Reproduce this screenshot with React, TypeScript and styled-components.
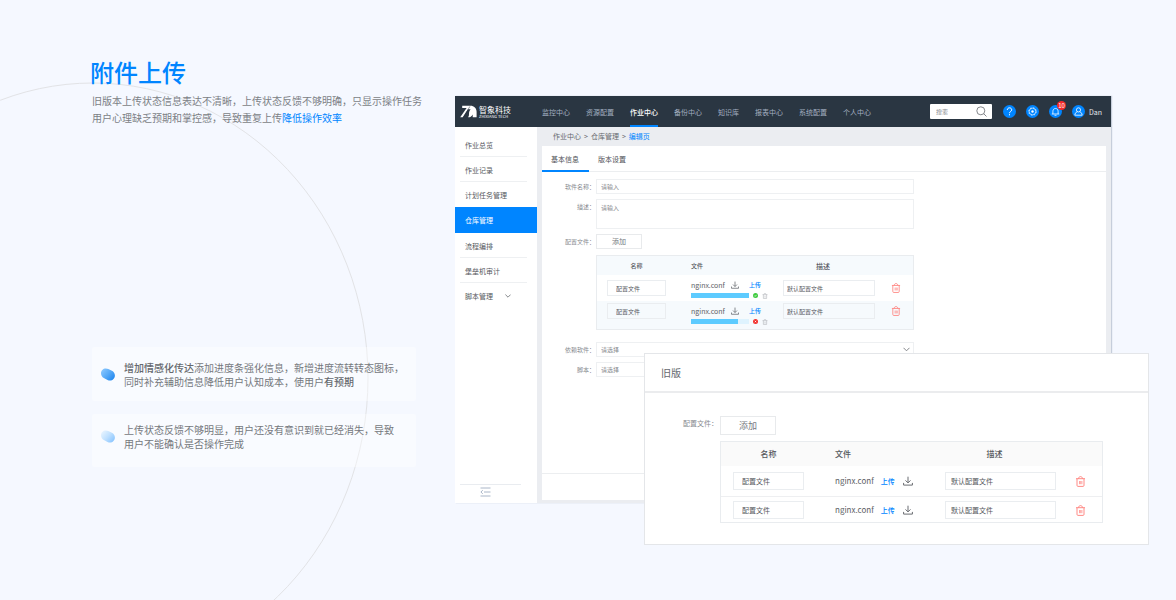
import React from "react";
import styled, { createGlobalStyle, css } from "styled-components";

const BLUE = "#0085ff";

const GlobalStyle = createGlobalStyle`
  *, *::before, *::after { box-sizing: border-box; }
  html, body { margin: 0; padding: 0; background: #f5f8ff; }
  body, button, input, textarea, select {
    font-family: "Noto Sans CJK SC", "Noto Sans", sans-serif;
  }
  button, input, textarea, select { margin: 0; border-radius: 0; outline-color: ${BLUE}; }
  a { text-decoration: none; }
  ul { list-style: none; margin: 0; padding: 0; }
  svg { display: block; flex: none; }
`;

/* ---------- page ---------- */

const Page = styled.div`
  position: relative;
  min-height: 100vh;
  overflow: hidden;
  display: grid;
  grid-template-columns: minmax(0, 326fr) minmax(0, 694fr);
  column-gap: 39px;
  padding: 57px 27px 50px 90px;
  align-items: start;
`;

const Arc = styled.svg`
  position: absolute;
  left: 0;
  top: 0;
  pointer-events: none;
`;

const Intro = styled.section`
  position: relative;
`;

const Title = styled.h1`
  margin: 0;
  font-size: 24px;
  line-height: 30px;
  font-weight: 500;
  color: ${BLUE};
`;

const Summary = styled.p`
  margin: 5px 0 0 2px;
  font-size: 10px;
  line-height: 17px;
  color: #7c7f85;
  white-space: nowrap;
`;

const Accent = styled.span`
  color: ${BLUE};
`;

const Notes = styled.div`
  margin: 221px 0 0 2px;
  display: flex;
  flex-direction: column;
  gap: 13px;
`;

const Note = styled.div<{ $raised?: boolean }>`
  display: flex;
  align-items: center;
  gap: 9px;
  padding: ${(p) => (p.$raised ? "9px 0 16px 9px" : "14px 0 12px 9px")};
  border-radius: 2px;
  background: rgba(255, 255, 255, 0.4);
  font-size: 10px;
  line-height: 14px;
  color: #75787d;
  white-space: nowrap;
`;

const Strong = styled.b`
  font-weight: 500;
  color: #66696e;
`;

/* ---------- application window ---------- */

const Stage = styled.section`
  position: relative;
  margin-top: 39px;
`;

const AppWindow = styled.div`
  margin-right: 38px;
  background: #ebedf1;
  box-shadow: 1px 0 1px rgba(60, 80, 110, 0.25);
`;

const TopBar = styled.header`
  display: flex;
  align-items: center;
  height: 31px;
  padding: 0 9px 0 5px;
  background: #2a3642;
`;

const Brand = styled.div`
  display: flex;
  align-items: center;
  gap: 2px;
  width: 82px;
  color: #fff;
`;

const BrandName = styled.div`
  font-size: 8px;
  line-height: 9px;
  white-space: nowrap;
`;

const BrandSub = styled.div`
  font-size: 4px;
  line-height: 5px;
  white-space: nowrap;
`;

const TopNav = styled.nav`
  display: flex;
  gap: 16px;
  height: 31px;
`;

const TopLink = styled.a<{ $active?: boolean }>`
  font-size: 7px;
  line-height: 32px;
  white-space: nowrap;
  color: ${(p) => (p.$active ? "#fff" : "#a3afc0")};
  font-weight: ${(p) => (p.$active ? 500 : 400)};
  box-shadow: ${(p) => (p.$active ? `inset 0 -2px ${BLUE}` : "none")};
`;

const Tools = styled.div`
  display: flex;
  align-items: center;
  gap: 10px;
  margin-left: auto;
`;

const SearchBox = styled.label`
  display: flex;
  align-items: center;
  width: 62px;
  height: 15px;
  margin-right: 1px;
  padding: 0 5px 0 6px;
  background: #fff;
  border-radius: 1px;
`;

const SearchInput = styled.input`
  flex: 1;
  min-width: 0;
  border: 0;
  padding: 0;
  background: transparent;
  font-size: 6px;
  line-height: 9px;
  &::placeholder { color: #888b90; opacity: 1; }
`;

const RoundButton = styled.button`
  position: relative;
  width: 13px;
  height: 13px;
  padding: 0;
  border: 0;
  border-radius: 50%;
  background: ${BLUE};
  display: flex;
  align-items: center;
  justify-content: center;
`;

const Badge = styled.span`
  position: absolute;
  right: -4px;
  top: -4px;
  width: 9px;
  height: 9px;
  border-radius: 50%;
  background: #f52a2a;
  color: #fff;
  font-size: 6px;
  line-height: 9px;
  text-align: center;
`;

const User = styled.div`
  display: flex;
  align-items: center;
  gap: 4px;
  font-size: 7px;
  line-height: 10px;
  color: #e4e8ee;
`;

const Body = styled.div`
  display: flex;
  align-items: stretch;
  min-height: 376px;
`;

const Sidebar = styled.aside`
  width: 82px;
  flex: none;
  display: flex;
  flex-direction: column;
  padding: 5px 0 6px;
  background: #fff;
`;

const SideItem = styled.li<{ $active?: boolean; $line?: boolean }>`
  ${(p) =>
    p.$active
      ? css`
          background: ${BLUE};
          padding: 0 10px;
          height: 26px;
        `
      : css`
          margin: 0 10px 0 5px;
          padding: 0 5px;
          height: 25px;
          border-bottom: 1px solid ${p.$line ? "#eef0f2" : "transparent"};
        `}
`;

const SideLink = styled.a<{ $active?: boolean }>`
  display: flex;
  align-items: center;
  gap: 12px;
  height: 25px;
  font-size: 7px;
  line-height: 10px;
  color: ${(p) => (p.$active ? "#fff" : "#55585d")};
`;

const SideFoot = styled.div`
  margin: auto 16px 0 5px;
  padding: 2px 11px 0 0;
  border-top: 1px solid #e9ecf0;
  display: flex;
  justify-content: center;
`;

const CollapseButton = styled.button`
  border: 0;
  background: transparent;
  padding: 0;
`;

const Main = styled.main`
  flex: 1;
  min-width: 0;
  display: flex;
  flex-direction: column;
  padding: 0 5px 3px;
`;

const Crumbs = styled.nav`
  display: flex;
  gap: 3px;
  height: 19px;
  padding-left: 11px;
  font-size: 7px;
  line-height: 18px;
  color: #66696e;
`;

const Crumb = styled.a<{ $current?: boolean }>`
  color: ${(p) => (p.$current ? BLUE : "inherit")};
`;

const Panel = styled.div`
  flex: 1;
  display: flex;
  flex-direction: column;
  background: #fff;
`;

const Tabs = styled.div`
  display: flex;
  height: 26px;
  border-bottom: 1px solid #eceef0;
`;

const Tab = styled.button<{ $active?: boolean }>`
  height: 26px;
  padding: 0 10px 0 9px;
  border: 0;
  background: transparent;
  box-shadow: ${(p) => (p.$active ? `inset 0 -2px ${BLUE}` : "none")};
  font-size: 7px;
  line-height: 26px;
  color: #4f5257;
`;

const Form = styled.form`
  display: flex;
  flex-direction: column;
  gap: 5px;
  max-width: 372px;
  padding-top: 7px;
`;

const PanelFoot = styled.div`
  margin-top: auto;
  height: 27px;
  border-top: 1px solid #eceef0;
`;

/* ---------- form parts ---------- */

const FieldRow = styled.div<{ $large?: boolean }>`
  display: grid;
  grid-template-columns: ${(p) => (p.$large ? "73px" : "53px")} minmax(0, 1fr);
  column-gap: ${(p) => (p.$large ? "2px" : "1px")};
`;

const Label = styled.label<{ $large?: boolean }>`
  text-align: right;
  font-size: ${(p) => (p.$large ? "7px" : "6px")};
  line-height: 15px;
  color: #888b90;
  white-space: nowrap;
`;

const fieldLook = css`
  width: 100%;
  border: 1px solid #eef0f2;
  background: #fff;
  font-size: 6px;
  line-height: 9px;
  color: #85888d;
`;

const TextInput = styled.input`
  ${fieldLook}
  height: 15px;
  padding: 0 4px;
  &::placeholder { color: #85888d; opacity: 1; }
`;

const TextArea = styled.textarea`
  ${fieldLook}
  display: block;
  height: 30px;
  padding: 3px 4px;
  resize: none;
  &::placeholder { color: #85888d; opacity: 1; }
`;

const SelectBox = styled.div`
  position: relative;
`;

const Select = styled.select`
  ${fieldLook}
  display: block;
  appearance: none;
  height: 15px;
  padding: 0 4px;
`;

const SelectArrow = styled.svg`
  position: absolute;
  right: 4px;
  top: 5px;
  pointer-events: none;
`;

const AddButton = styled.button<{ $large?: boolean }>`
  display: block;
  width: ${(p) => (p.$large ? "56px" : "46px")};
  height: ${(p) => (p.$large ? "19px" : "15px")};
  margin-bottom: 6px;
  padding: 0;
  border: 1px solid #e8eaec;
  background: #fff;
  font-size: ${(p) => (p.$large ? "9px" : "7px")};
  line-height: 13px;
  color: #777a7f;
`;

/* ---------- file table ---------- */

const TableFrame = styled.div<{ $large?: boolean }>`
  border: 1px solid #e9ecef;
  margin-bottom: ${(p) => (p.$large ? "0" : "7px")};
`;

const Table = styled.table`
  width: 100%;
  table-layout: fixed;
  border-collapse: separate;
  border-spacing: 0;
`;

type CellKind = "name" | "file" | "desc" | "action";

const smallPad = { name: "0 10px", file: "0 0 0 15px", desc: "0 10px", action: "0 0 0 6px" };
const largePad = { name: "0 12px", file: "0 0 0 19px", desc: "0 12px", action: "0 0 0 7px" };
const smallWidth = { name: "79px", file: "97px", desc: "auto", action: "28px" };
const largeWidth = { name: "95px", file: "117px", desc: "auto", action: "34px" };

const HeadCell = styled.th<{ $large?: boolean; $kind: CellKind }>`
  width: ${(p) => (p.$large ? largeWidth : smallWidth)[p.$kind]};
  height: ${(p) => (p.$large ? "24px" : "19px")};
  padding: ${(p) => (p.$large ? largePad : smallPad)[p.$kind]};
  ${(p) => p.$kind === "desc" && "padding: 0 12px 0 0;"}
  background: ${(p) => (p.$large ? "#fafafa" : "#f6fafd")};
  text-align: ${(p) => (p.$kind === "file" ? "left" : "center")};
  font-size: ${(p) => (p.$large ? "8px" : p.$kind === "desc" ? "7px" : "6px")};
  line-height: 10px;
  font-weight: 500;
  color: #55585d;
`;

const BodyRow = styled.tr<{ $large?: boolean; $second?: boolean }>`
  height: ${(p) => (p.$large ? (p.$second ? "25px" : "31px") : p.$second ? "28px" : "26px")};
  background: ${(p) => (!p.$large && p.$second ? "#f6fafd" : "#fff")};
`;

const Cell = styled.td<{ $large?: boolean; $second?: boolean; $kind: CellKind }>`
  vertical-align: top;
  padding: ${(p) => (p.$large ? largePad : smallPad)[p.$kind]};
  padding-top: ${(p) => (p.$large ? (p.$second ? "4px" : "6px") : p.$second ? "2px" : "5px")};
  ${(p) =>
    p.$large && !p.$second ? "border-bottom: 1px solid #eeeff1;" : ""}
  ${(p) => !p.$large && p.$kind === "file" && "padding-top: 5px;"}
`;

const CellInput = styled.input<{ $large?: boolean; $name?: boolean }>`
  display: block;
  width: 100%;
  height: ${(p) => (p.$large ? "18px" : "16px")};
  padding: 0 0 0 ${(p) => (p.$name ? "8px" : p.$large ? "5px" : "3px")};
  border: 1px solid #eaedf0;
  background: transparent;
  font-size: ${(p) => (p.$large ? "7px" : "6px")};
  line-height: 10px;
  color: #55585d;
`;

const FileLine = styled.div<{ $large?: boolean }>`
  display: flex;
  align-items: center;
  height: ${(p) => (p.$large ? "18px" : "10px")};
  gap: ${(p) => (p.$large ? "7px" : "6px")};
  line-height: 10px;
`;

const FileName = styled.span<{ $large?: boolean }>`
  font-size: ${(p) => (p.$large ? "8px" : "7px")};
  color: #5d6065;
`;

const UploadLink = styled.a<{ $large?: boolean }>`
  font-size: ${(p) => (p.$large ? "7px" : "6px")};
  font-weight: 500;
  color: ${BLUE};
  margin: ${(p) => (p.$large ? "0 1px 0 0" : "0 0 0 4px")};
`;

const ProgressLine = styled.div`
  display: flex;
  align-items: center;
  gap: 4px;
  margin-top: 3px;
  height: 5px;
`;

const Progress = styled.progress`
  appearance: none;
  display: block;
  width: 58px;
  height: 5px;
  border: 0;
  &::-webkit-progress-bar { background: #dff3fe; }
  &::-webkit-progress-value { background: #5dcbff; }
`;

const IconButton = styled.button<{ $height?: number }>`
  display: flex;
  align-items: center;
  height: ${(p) => (p.$height ? `${p.$height}px` : "auto")};
  padding: 0;
  border: 0;
  background: transparent;
`;

/* ---------- old version panel ---------- */

const OldPanel = styled.section`
  position: absolute;
  top: 257px;
  left: 189px;
  right: 0;
  background: #fff;
  border: 1px solid #e4e6e9;
`;

const OldTitle = styled.h2`
  margin: 0;
  padding-left: 16px;
  height: 39px;
  border-bottom: 2px solid #ebecee;
  font-size: 10px;
  line-height: 38px;
  font-weight: 400;
  color: #66696e;
`;

const OldBody = styled.div`
  padding: 23px 45px 21px 0;
`;

/* ---------- icons ---------- */

const Pill = ({ light }: { light?: boolean }) => {
  const id = light ? "pillLight" : "pillDark";
  return (
    <svg width="14" height="14" viewBox="0 0 14 14" aria-hidden="true">
      <defs>
        <linearGradient id={id} x1="0" y1="0.1" x2="1" y2="0.9">
          <stop offset="0" stopColor={light ? "#eaf5ff" : "#8cc8ff"} />
          <stop offset="0.5" stopColor={light ? "#bfe0ff" : "#56a9f7"} />
          <stop offset="1" stopColor={light ? "#84c2ff" : "#1c84ee"} />
        </linearGradient>
      </defs>
      <path
        d="M4.8.5c1 0 1.700.2 2.500.6l3.600 1.700c1.800.9 3 2.700 3 4.800 0 2.900-2.200 5-4.900 5-.9 0-1.700-.2-2.500-.6L2.800 10C1.100 9.100 0 7.400 0 5.300 0 2.600 2.100.5 4.800.5Z"
        fill={`url(#${id})`}
      />
    </svg>
  );
};

const LogoMark = () => (
  <svg width="17" height="13" viewBox="0 0 17 13" aria-hidden="true">
    <path d="M2.200.8h8.200C14 .8 16.600 3.400 16.600 6.800v5.500h-3.900V9.400c-1 1.900-2.600 2.900-4.600 2.900.7-1 1-2 .9-3.200-.1-1.500.3-3.200 1.600-4.800L7.900 4.200 2.700 12.300H.2L6.600 2.900H2.200Z" fill="#fff" />
    <path d="M9.900 1.400 3.600 12.200" stroke="#2a3642" strokeWidth=".5" fill="none" />
  </svg>
);

const DownloadIcon = ({ size }: { size: number }) => (
  <svg width={size} height={size} viewBox="0 0 10 10" fill="none" stroke="#6a6d72" strokeWidth="1" aria-hidden="true">
    <path d="M5 .7v6.100M2.500 4.400 5 6.900l2.500-2.500M.6 6.900v2.200h8.800V6.900" />
  </svg>
);

const TrashIcon = ({ size, color }: { size: number; color: string }) => (
  <svg width={size} height={size} viewBox="0 0 10 11" fill="none" stroke={color} strokeWidth=".9" aria-hidden="true">
    <path d="M.5 2.700h9M3 2.600C3.200 1.200 4 .6 5 .6s1.800.6 2 2M1.500 2.900v6.500c0 .6.400 1 1 1h5c.6 0 1-.4 1-1V2.900" />
    <path d="M4 5v3.200M5.200 5v3.200M6.400 5v3.200" strokeWidth=".7" />
  </svg>
);

const TinyTrashIcon = () => (
  <svg width="6" height="6" viewBox="0 0 10 11" fill="none" stroke="#b9bcc0" strokeWidth="1.200" aria-hidden="true">
    <path d="M.5 3h9M3 2.600C3.200 1.200 4 .8 5 .8s1.800.4 2 1.800M2 3v7h6V3M5 5v3.500" />
  </svg>
);

const Chevron = ({ color = "#66696e" }: { color?: string }) => (
  <svg width="6" height="4" viewBox="0 0 6 4" fill="none" stroke={color} strokeWidth=".8" aria-hidden="true">
    <path d="m.4.6 2.600 2.600L5.600.6" />
  </svg>
);

const StatusIcon = ({ ok }: { ok: boolean }) => (
  <svg width="5" height="5" viewBox="0 0 10 10" aria-hidden="true">
    <circle cx="5" cy="5" r="5" fill={ok ? "#3ecb3e" : "#f2322e"} />
    {ok ? (
      <path d="M2.700 5.200 4.300 6.800l3-3.200" stroke="#fff" strokeWidth="1.400" fill="none" />
    ) : (
      <path d="m3.600 3.600 2.800 2.800M6.400 3.600 3.600 6.400" stroke="#fff" strokeWidth="1.600" fill="none" />
    )}
  </svg>
);

/* ---------- composed parts ---------- */

const files = [
  { name: "配置文件", file: "nginx.conf", progress: 100, desc: "默认配置文件" },
  { name: "配置文件", file: "nginx.conf", progress: 81, desc: "默认配置文件" },
];

const FileTable = ({ large }: { large?: boolean }) => (
  <TableFrame $large={large}>
    <Table>
      <thead>
        <tr>
          <HeadCell $large={large} $kind="name">名称</HeadCell>
          <HeadCell $large={large} $kind="file">文件</HeadCell>
          <HeadCell $large={large} $kind="desc">描述</HeadCell>
          <HeadCell $large={large} $kind="action" aria-label="操作" />
        </tr>
      </thead>
      <tbody>
        {files.map((f, i) => {
          const cell = { $large: large, $second: i === 1 };
          return (
            <BodyRow key={i} {...cell}>
              <Cell {...cell} $kind="name">
                <CellInput $large={large} $name defaultValue={f.name} aria-label="名称" />
              </Cell>
              <Cell {...cell} $kind="file">
                <FileLine $large={large}>
                  <FileName $large={large}>{f.file}</FileName>
                  {large && <UploadLink $large href="#upload">上传</UploadLink>}
                  <IconButton type="button" aria-label="下载">
                    <DownloadIcon size={large ? 10 : 8} />
                  </IconButton>
                  {!large && <UploadLink href="#upload">上传</UploadLink>}
                </FileLine>
                {!large && (
                  <ProgressLine>
                    <Progress value={f.progress} max={100} aria-label="上传进度" />
                    <StatusIcon ok={f.progress === 100} />
                    <IconButton type="button" aria-label="移除">
                      <TinyTrashIcon />
                    </IconButton>
                  </ProgressLine>
                )}
              </Cell>
              <Cell {...cell} $kind="desc">
                <CellInput $large={large} defaultValue={f.desc} aria-label="描述" />
              </Cell>
              <Cell {...cell} $kind="action">
                <IconButton $height={large ? 18 : 16} type="button" aria-label="删除">
                  <TrashIcon size={large ? 11 : 10} color="#ff7d78" />
                </IconButton>
              </Cell>
            </BodyRow>
          );
        })}
      </tbody>
    </Table>
  </TableFrame>
);

const topLinks = ["监控中心", "资源配置", "作业中心", "备份中心", "知识库", "报表中心", "系统配置", "个人中心"];
const sideLinks = ["作业总览", "作业记录", "计划任务管理", "仓库管理", "流程编排", "堡垒机审计", "脚本管理"];

const PlaceholderSelect = ({ id }: { id: string }) => (
  <SelectBox>
    <Select id={id} defaultValue="">
      <option value="">请选择</option>
    </Select>
    <SelectArrow width="7" height="5" viewBox="0 0 7 5" fill="none" stroke="#777a7f" strokeWidth=".9" aria-hidden="true">
      <path d="m.5.800 3 3 3-3" />
    </SelectArrow>
  </SelectBox>
);

export default function App() {
  return (
    <Page>
      <GlobalStyle />
      <Arc width="400" height="700" viewBox="0 0 400 700" aria-hidden="true">
        <ellipse cx="93" cy="378" rx="275" ry="295" fill="none" stroke="#e2e3e6" strokeWidth="1" />
      </Arc>

      <Intro>
        <Title>附件上传</Title>
        <Summary>
          旧版本上传状态信息表达不清晰，上传状态反馈不够明确，只显示操作任务
          <br />
          用户心理缺乏预期和掌控感，导致重复上传<Accent>降低操作效率</Accent>
        </Summary>
        <Notes>
          <Note>
            <Pill />
            <div>
              <Strong>增加情感化传达</Strong>添加进度条强化信息，新增进度流转转态图标，
              <br />
              同时补充辅助信息降低用户认知成本，使用户<Strong>有预期</Strong>
            </div>
          </Note>
          <Note $raised>
            <Pill light />
            <div>
              上传状态反馈不够明显，用户还没有意识到就已经消失，导致
              <br />
              用户不能确认是否操作完成
            </div>
          </Note>
        </Notes>
      </Intro>

      <Stage>
        <AppWindow>
          <TopBar>
            <Brand>
              <LogoMark />
              <div>
                <BrandName>智象科技</BrandName>
                <BrandSub>ZHIXIANG TECH</BrandSub>
              </div>
            </Brand>
            <TopNav>
              {topLinks.map((t) => (
                <TopLink key={t} href="#nav" $active={t === "作业中心"}>{t}</TopLink>
              ))}
            </TopNav>
            <Tools>
              <SearchBox>
                <SearchInput placeholder="搜索" aria-label="搜索" />
                <svg width="11" height="11" viewBox="0 0 11 11" fill="none" stroke="#66696e" strokeWidth=".8" aria-hidden="true">
                  <circle cx="4.800" cy="4.800" r="4" />
                  <path d="m7.700 7.700 2.800 2.800" />
                </svg>
              </SearchBox>
              <RoundButton aria-label="帮助">
                <svg width="9" height="9" viewBox="0 0 9 9" fill="none" stroke="#fff" strokeWidth="1" aria-hidden="true">
                  <path d="M2.300 3c0-1.300 1-2.200 2.200-2.200S6.700 1.600 6.700 2.800c0 1.600-2.200 1.700-2.200 3.400M4.500 7.200v1.100" />
                </svg>
              </RoundButton>
              <RoundButton aria-label="设置">
                <svg width="9" height="9" viewBox="0 0 9 9" fill="none" stroke="#fff" aria-hidden="true">
                  <circle cx="4.500" cy="4.500" r="3.300" strokeWidth=".6" />
                  <circle cx="4.500" cy="4.500" r="3.800" strokeWidth=".7" strokeDasharray="1.500 1.480" />
                  <circle cx="4.500" cy="4.500" r="1.200" fill="#fff" stroke="none" />
                </svg>
              </RoundButton>
              <RoundButton aria-label="通知">
                <svg width="9" height="9" viewBox="0 0 9 9" fill="none" stroke="#fff" strokeWidth=".8" aria-hidden="true">
                  <path d="M.8 7h7.400M1.900 6.900V4.200C1.900 2.600 3 1.500 4.500 1.500s2.600 1.100 2.600 2.700v2.700M3.500 8.300h2" />
                </svg>
                <Badge>10</Badge>
              </RoundButton>
              <User>
                <RoundButton aria-label="账户">
                  <svg width="9" height="9" viewBox="0 0 9 9" fill="none" stroke="#fff" strokeWidth=".8" aria-hidden="true">
                    <circle cx="4.500" cy="2.900" r="2.100" />
                    <path d="M3.300 4.700C1.900 5.200.9 6.500.8 8.200h7.400C8.100 6.500 7.100 5.200 5.700 4.700" />
                  </svg>
                </RoundButton>
                <span>Dan</span>
              </User>
            </Tools>
          </TopBar>

          <Body>
            <Sidebar>
              <ul>
                {sideLinks.map((t, i) => (
                  <SideItem key={t} $active={i === 3} $line={i !== 2 && i !== 6}>
                    <SideLink href="#side" $active={i === 3}>
                      {t}
                      {i === 6 && <Chevron />}
                    </SideLink>
                  </SideItem>
                ))}
              </ul>
              <SideFoot>
                <CollapseButton type="button" aria-label="收起菜单">
                  <svg width="11" height="10" viewBox="0 0 11 10" fill="none" stroke="#94a3ba" strokeWidth=".8" aria-hidden="true">
                    <path d="M.5 1h10M4 5h6.500M.5 9h10M2.800 3.200.9 5l1.900 1.800" />
                  </svg>
                </CollapseButton>
              </SideFoot>
            </Sidebar>

            <Main>
              <Crumbs>
                <Crumb href="#jobs">作业中心</Crumb>
                <span>&gt;</span>
                <Crumb href="#store">仓库管理</Crumb>
                <span>&gt;</span>
                <Crumb href="#edit" $current>编辑页</Crumb>
              </Crumbs>
              <Panel>
                <Tabs>
                  <Tab type="button" $active>基本信息</Tab>
                  <Tab type="button">版本设置</Tab>
                </Tabs>
                <Form>
                  <FieldRow>
                    <Label htmlFor="software">软件名称：</Label>
                    <TextInput id="software" placeholder="请输入" />
                  </FieldRow>
                  <FieldRow>
                    <Label htmlFor="description">描述：</Label>
                    <TextArea id="description" placeholder="请输入" />
                  </FieldRow>
                  <FieldRow>
                    <Label htmlFor="add-file">配置文件：</Label>
                    <div>
                      <AddButton id="add-file" type="button">添加</AddButton>
                      <FileTable />
                    </div>
                  </FieldRow>
                  <FieldRow>
                    <Label htmlFor="depends">依赖软件：</Label>
                    <PlaceholderSelect id="depends" />
                  </FieldRow>
                  <FieldRow>
                    <Label htmlFor="script">脚本：</Label>
                    <PlaceholderSelect id="script" />
                  </FieldRow>
                </Form>
                <PanelFoot />
              </Panel>
            </Main>
          </Body>
        </AppWindow>

        <OldPanel>
          <OldTitle>旧版</OldTitle>
          <OldBody>
            <FieldRow $large>
              <Label $large htmlFor="add-old">配置文件：</Label>
              <div>
                <AddButton $large id="add-old" type="button">添加</AddButton>
                <FileTable large />
              </div>
            </FieldRow>
          </OldBody>
        </OldPanel>
      </Stage>
    </Page>
  );
}
